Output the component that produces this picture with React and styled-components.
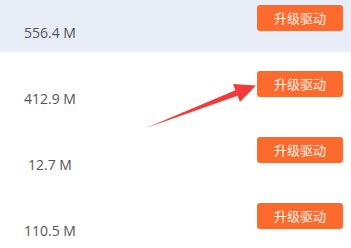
import React from "react";
import styled, { createGlobalStyle } from "styled-components";

const rows = [
  { size: "556.4 M", active: true },
  { size: "412.9 M" },
  { size: "12.7 M" },
  { size: "110.5 M" },
];

function App() {
  return (
    <>
      <GlobalStyle />
      <Page>
        <List>
          {rows.map((row) => (
            <Row key={row.size} active={row.active}>
              <Size>{row.size}</Size>
              <UpgradeButton>升级驱动</UpgradeButton>
            </Row>
          ))}
        </List>
        <Arrow viewBox="0 0 351 248" width="351" height="248">
          <polygon
            points="146,128 235.4,90.2 233,84 256,85.4 240,102 237.6,95.8"
            fill="#f23a3a"
          />
        </Arrow>
      </Page>
    </>
  );
}

export default App;

const GlobalStyle = createGlobalStyle`
  html, body {
    margin: 0;
    padding: 0;
    background: #fff;
    overflow: hidden;
  }
  body {
    font-family: "Open Sans", "Noto Sans CJK SC", sans-serif;
  }
`;

const Page = styled.div`
  position: relative;
  width: 351px;
  height: 248px;
  overflow: hidden;
`;

const List = styled.div`
  display: flex;
  flex-direction: column;
  margin-top: -14px;
`;

const Row = styled.div`
  height: 66px;
  display: flex;
  justify-content: space-between;
  align-items: flex-start;
  padding-right: 8px;
  box-sizing: border-box;
  background: ${(props) => (props.active ? "#e8edf8" : "#fff")};
`;

const Size = styled.div`
  width: 100px;
  padding-top: 37px;
  text-align: center;
  font-size: 14px;
  line-height: 20px;
  color: #555;
`;

const UpgradeButton = styled.button`
  margin-top: 19px;
  width: 86px;
  height: 26px;
  padding: 0;
  border: none;
  border-radius: 3px;
  background: #fd6a2d;
  color: #fff4ee;
  font-family: "Noto Sans CJK SC", sans-serif;
  font-size: 13px;
  line-height: 26px;
  cursor: pointer;
`;

const Arrow = styled.svg`
  position: absolute;
  left: 0;
  top: 0;
  pointer-events: none;
`;
